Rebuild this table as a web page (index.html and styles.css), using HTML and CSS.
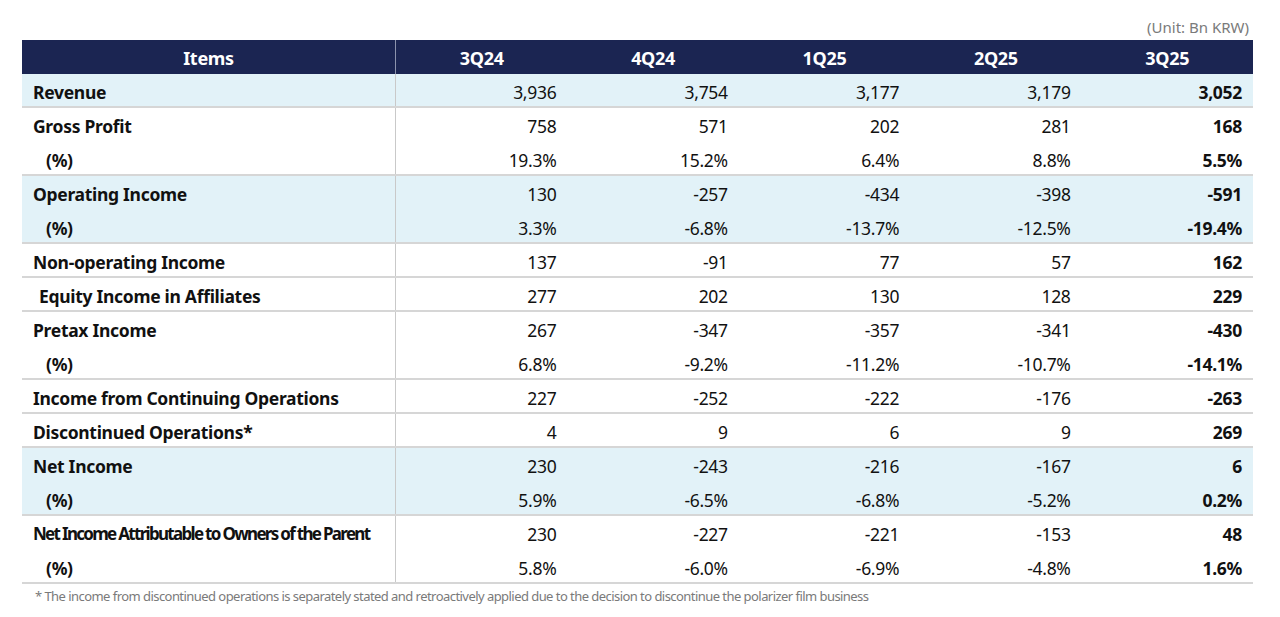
FILE: index.html
```html
<!DOCTYPE html>
<html lang="en">
<head>
<meta charset="utf-8">
<title>Income Statement</title>
<link rel="stylesheet" href="styles.css">
</head>
<body>
<div class="page">
  <div class="unit">(Unit: Bn KRW)</div>
  <div class="table">
    <div class="row head">
      <div class="c item">Items</div>
      <div class="c">3Q24</div>
      <div class="c">4Q24</div>
      <div class="c">1Q25</div>
      <div class="c">2Q25</div>
      <div class="c">3Q25</div>
    </div>
    <div class="row blue line">
      <div class="c item">Revenue</div>
      <div class="c">3,936</div><div class="c">3,754</div><div class="c">3,177</div><div class="c">3,179</div><div class="c last">3,052</div>
    </div>
    <div class="row">
      <div class="c item">Gross Profit</div>
      <div class="c">758</div><div class="c">571</div><div class="c">202</div><div class="c">281</div><div class="c last">168</div>
    </div>
    <div class="row line">
      <div class="c item pct">(%)</div>
      <div class="c">19.3%</div><div class="c">15.2%</div><div class="c">6.4%</div><div class="c">8.8%</div><div class="c last">5.5%</div>
    </div>
    <div class="row blue">
      <div class="c item">Operating Income</div>
      <div class="c">130</div><div class="c">-257</div><div class="c">-434</div><div class="c">-398</div><div class="c last">-591</div>
    </div>
    <div class="row blue line">
      <div class="c item pct">(%)</div>
      <div class="c">3.3%</div><div class="c">-6.8%</div><div class="c">-13.7%</div><div class="c">-12.5%</div><div class="c last">-19.4%</div>
    </div>
    <div class="row line">
      <div class="c item">Non-operating Income</div>
      <div class="c">137</div><div class="c">-91</div><div class="c">77</div><div class="c">57</div><div class="c last">162</div>
    </div>
    <div class="row line">
      <div class="c item sub">Equity Income in Affiliates</div>
      <div class="c">277</div><div class="c">202</div><div class="c">130</div><div class="c">128</div><div class="c last">229</div>
    </div>
    <div class="row">
      <div class="c item">Pretax Income</div>
      <div class="c">267</div><div class="c">-347</div><div class="c">-357</div><div class="c">-341</div><div class="c last">-430</div>
    </div>
    <div class="row line">
      <div class="c item pct">(%)</div>
      <div class="c">6.8%</div><div class="c">-9.2%</div><div class="c">-11.2%</div><div class="c">-10.7%</div><div class="c last">-14.1%</div>
    </div>
    <div class="row line">
      <div class="c item">Income from Continuing Operations</div>
      <div class="c">227</div><div class="c">-252</div><div class="c">-222</div><div class="c">-176</div><div class="c last">-263</div>
    </div>
    <div class="row line">
      <div class="c item">Discontinued Operations*</div>
      <div class="c">4</div><div class="c">9</div><div class="c">6</div><div class="c">9</div><div class="c last">269</div>
    </div>
    <div class="row blue">
      <div class="c item">Net Income</div>
      <div class="c">230</div><div class="c">-243</div><div class="c">-216</div><div class="c">-167</div><div class="c last">6</div>
    </div>
    <div class="row blue line">
      <div class="c item pct">(%)</div>
      <div class="c">5.9%</div><div class="c">-6.5%</div><div class="c">-6.8%</div><div class="c">-5.2%</div><div class="c last">0.2%</div>
    </div>
    <div class="row">
      <div class="c item tight">Net Income Attributable to Owners of the Parent</div>
      <div class="c">230</div><div class="c">-227</div><div class="c">-221</div><div class="c">-153</div><div class="c last">48</div>
    </div>
    <div class="row line">
      <div class="c item pct">(%)</div>
      <div class="c">5.8%</div><div class="c">-6.0%</div><div class="c">-6.9%</div><div class="c">-4.8%</div><div class="c last">1.6%</div>
    </div>
  </div>
  <div class="note">* The income from discontinued operations is separately stated and retroactively applied due to the decision to discontinue the polarizer film business</div>
</div>
</body>
</html>
```

FILE: styles.css
```css
* { box-sizing: border-box; }
html, body { margin: 0; padding: 0; background: #ffffff; }
body {
  font-family: "Noto Sans", "Open Sans", "Noto Sans CJK KR", sans-serif;
  color: #111111;
}
.page {
  width: 1280px;
  padding: 14px 27px 0 22px;
}
.unit {
  text-align: right;
  font-size: 15px;
  line-height: 26px;
  color: #7a7a7a;
  padding-right: 4px;
}
.table {
  width: 1231px;
}
.row {
  display: grid;
  grid-template-columns: 374px repeat(5, 1fr);
  height: 34px;
}
.row.line { border-bottom: 2px solid #d6d6d6; }
.row.blue { background: #e2f2f8; }
.c {
  display: flex;
  align-items: center;
  justify-content: flex-end;
  padding-right: 11px;
  padding-top: 1px;
  font-size: 17.5px;
  letter-spacing: -0.3px;
  white-space: nowrap;
}
.row.line .c { padding-top: 3px; }
.c.item {
  justify-content: flex-start;
  padding-left: 11px;
  font-weight: 700;
  border-right: 1px solid #c9c9c9;
}
.c.item.pct { padding-left: 24px; }
.c.item.sub { padding-left: 17px; }
.c.item.tight { letter-spacing: -1.7px; font-size: 17px; }
.c.last { font-weight: 700; }
.row.head {
  background: #1b2552;
  height: 34px;
}
.row.head .c {
  justify-content: center;
  padding: 2px 0 0;
  color: #ffffff;
  font-weight: 700;
  font-size: 18px;
}
.row.head .c.item { border-right: 1px solid #8c93ad; }
.note {
  font-size: 13px;
  color: #7a7a7a;
  padding-left: 13px;
  line-height: 24px;
  letter-spacing: -0.55px;
}
```
